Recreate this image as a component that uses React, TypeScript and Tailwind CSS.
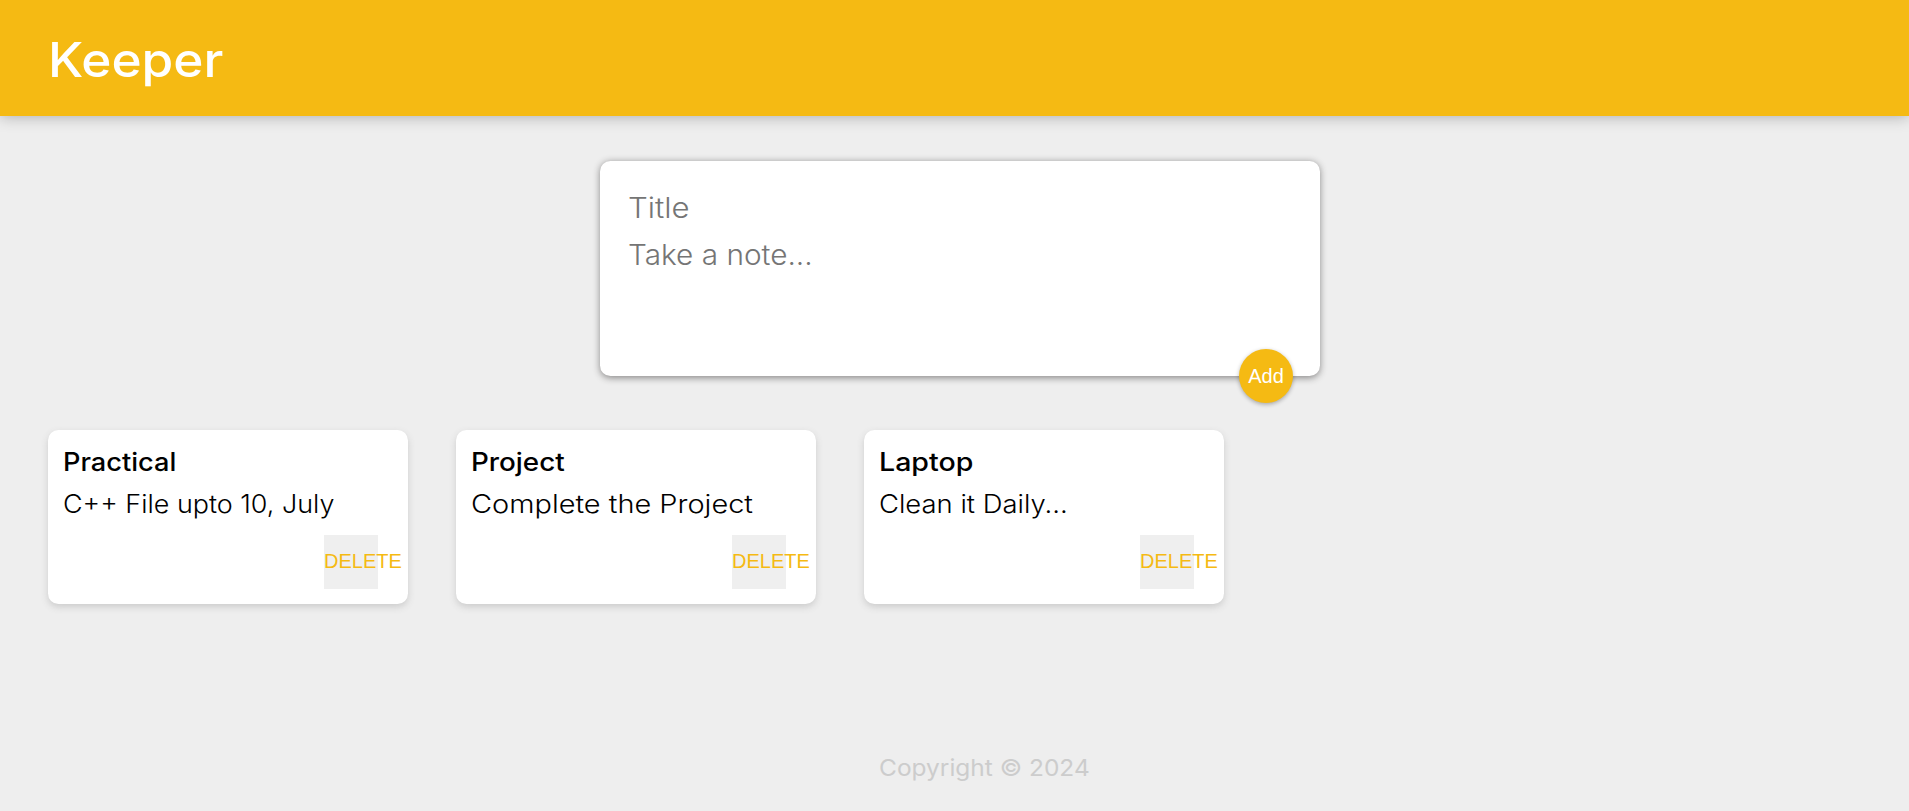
interface NoteData {
  title: string;
  content: string;
  titleClass: string;
  contentClass: string;
}

const notes: NoteData[] = [
  { title: "Practical", content: "C++ File upto 10, July", titleClass: "scale-x-[1.07]", contentClass: "scale-x-[1.06]" },
  { title: "Project", content: "Complete the Project", titleClass: "scale-x-[1.095]", contentClass: "scale-x-[1.14]" },
  { title: "Laptop", content: "Clean it Daily...", titleClass: "scale-x-[1.125]", contentClass: "scale-x-[1.08]" },
];

function Header() {
  return (
    <header className="flex h-[116px] items-center bg-[#f5ba13] px-12 shadow-[0_0_15px_0_rgba(0,0,0,0.3)]">
      <h1 className="mt-1 origin-left scale-x-[1.07] text-[48px] leading-[72px] font-medium text-white">Keeper</h1>
    </header>
  );
}

function CreateArea() {
  return (
    <form className="relative mt-[45px] ml-[600px] flex h-[215px] w-[720px] flex-col items-start rounded-[10.5px] bg-white px-7 pt-[26px] font-light text-[#757575] shadow-[0_1.5px_7.5px_rgb(138,137,137)]">
      <span className="origin-left scale-x-[1.12] text-[27.8px] leading-[43px]">Title</span>
      <span className="mt-1 origin-left scale-x-[1.07] text-[27.8px] leading-[43px]">Take a note...</span>
      <button
        type="button"
        className="absolute right-[27px] bottom-[-27px] size-[54px] rounded-full bg-[#f5ba13] pb-px font-['Liberation_Sans',Arial,sans-serif] text-[20px] font-normal text-white shadow-[0_1.5px_4.5px_rgba(0,0,0,0.3)]"
      >
        Add
      </button>
    </form>
  );
}

function Note({ title, content, titleClass, contentClass }: NoteData) {
  return (
    <article className="flex h-[174px] w-[360px] flex-col items-start rounded-[10.5px] bg-white px-[15px] pt-[15px] whitespace-nowrap text-black shadow-[0_3px_7.5px_#ccc]">
      <h2 className={"origin-left text-[25.4px] leading-[33px] font-medium " + titleClass}>{title}</h2>
      <p className={"mt-[9px] origin-left text-[25.4px] leading-[33px] font-light " + contentClass}>{content}</p>
      <button
        type="button"
        className="mt-[15px] mr-[15px] flex size-[54px] items-center self-end bg-[#efefef] pb-0.5 font-['Liberation_Sans',Arial,sans-serif] text-[20px] text-[#f5ba13]"
      >
        DELETE
      </button>
    </article>
  );
}

export default function App() {
  return (
    <div className="flex h-[811px] flex-col items-start overflow-hidden bg-[#eee] font-['Inter','Open_Sans',sans-serif]">
      <div className="w-full">
        <Header />
      </div>
      <CreateArea />
      <main className="mt-[54px] ml-12 flex gap-12">
        {notes.map((note) => (
          <Note key={note.title} {...note} />
        ))}
      </main>
      <footer className="mt-[146px] ml-[879px] origin-left scale-x-[1.06] text-[23.1px] leading-9 text-[#ccc]">
        Copyright © 2024
      </footer>
    </div>
  );
}
